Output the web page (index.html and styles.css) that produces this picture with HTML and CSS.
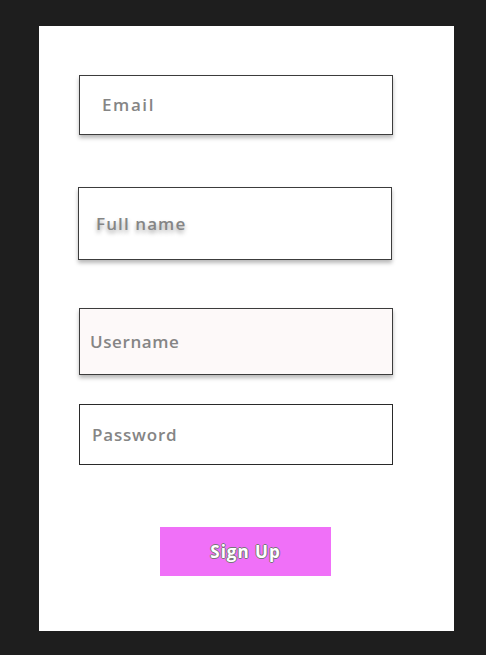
FILE: index.html
```html
<!DOCTYPE html>
<html>
<head>
<meta charset="utf-8">
<link rel="stylesheet" href="styles.css">
</head>
<body>
<form class="card">
  <div class="field field-email"><span class="ph">Email</span></div>
  <div class="field field-name"><span class="ph">Full name</span></div>
  <div class="field field-user"><span class="ph">Username</span></div>
  <div class="field field-pass"><span class="ph">Password</span></div>
  <button type="button" class="signup">Sign Up</button>
</form>
</body>
</html>
```
FILE: styles.css
```css
html, body {
  margin: 0;
  background: #1e1e1e;
}
body {
  padding: 26px 32px 24px 39px;
  font-family: "Open Sans", "DejaVu Sans", sans-serif;
}
.card {
  width: 375px;
  height: 556px;
  background: #ffffff;
  padding: 49px 0 0 40px;
  display: flex;
  flex-direction: column;
  align-items: flex-start;
}
.field {
  box-sizing: border-box;
  width: 314px;
  border: 1px solid #3c3c3c;
  background: #fff;
  display: flex;
  align-items: center;
}
.ph {
  color: #858585;
  font-size: 17px;
  font-weight: 600;
  letter-spacing: 1.1px;
  line-height: 20px;
}
.field-email {
  height: 60px;
  padding-left: 22px;
  box-shadow: 0 3px 4px rgba(0,0,0,0.28);
}
.field-email .ph {
  letter-spacing: 1.6px;
}
.field-name {
  margin-top: 52px;
  margin-left: -1px;
  height: 73px;
  padding-left: 17px;
  box-shadow: 0 3px 4px rgba(0,0,0,0.28);
}
.field-name .ph {
  text-shadow: 0 3px 4px rgba(0,0,0,0.35);
}
.field-user {
  margin-top: 48px;
  height: 67px;
  padding-left: 10px;
  background: #fdf9f9;
  box-shadow: 0 3px 4px rgba(0,0,0,0.28);
}
.field-user .ph {
  letter-spacing: 0.6px;
}
.field-pass {
  margin-top: 29px;
  height: 61px;
  padding-left: 12px;
  border-color: #2a2a2a;
}
.field-pass .ph {
  letter-spacing: 0.8px;
}
.signup {
  margin-top: 62px;
  margin-left: 81px;
  width: 171px;
  height: 49px;
  border: none;
  background: #f070f8;
  color: #ffffff;
  font-family: "Open Sans", "DejaVu Sans", sans-serif;
  font-size: 17px;
  font-weight: 700;
  letter-spacing: 1px;
  text-shadow: -1px 0 #777, 1px 0 #777, 0 -1px #777, 0 1px #777;
  padding: 0;
}
```
